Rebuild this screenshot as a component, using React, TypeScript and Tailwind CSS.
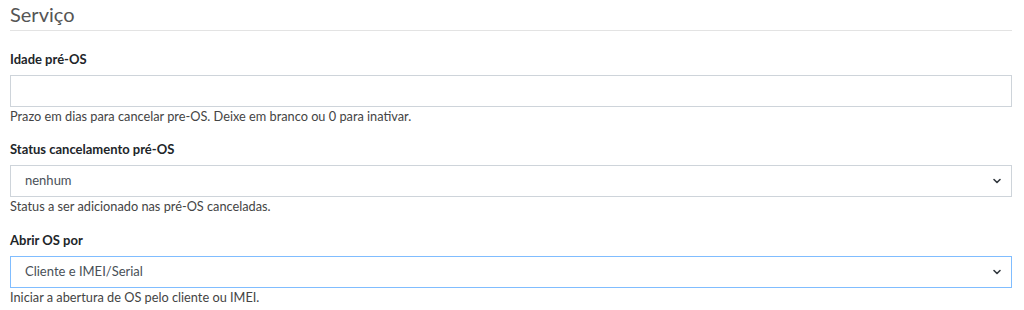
import { ChevronDown } from "lucide-react";

/** Bold field label above a control. */
function FieldLabel({ children }: { children: string }) {
  return <label className="block text-[13px] leading-[16px] font-bold text-[#212529] mb-[8px]">{children}</label>;
}

/** Help text below a control. */
function Help({ children }: { children: string }) {
  return <p className="text-[12.75px] leading-[18px] text-[#444]">{children}</p>;
}

/** Fake select box, optionally in focused state. */
function SelectBox({ value, focused }: { value: string; focused?: boolean }) {
  return (
    <div
      className={
        focused
          ? "h-[32px] flex items-center justify-between border border-[#80bdff] bg-white pl-[14px] pr-[8px] text-[13px] text-[#495057]"
          : "h-[32px] flex items-center justify-between border border-[#ced4da] bg-white pl-[14px] pr-[8px] text-[13px] text-[#495057]"
      }
    >
      <span>{value}</span>
      <ChevronDown size={12} strokeWidth={3.25} className="text-[#343a40]" />
    </div>
  );
}

export default function App() {
  return (
    <div className="w-[1024px] h-[310px] bg-white pl-[10px] pr-[12px] pt-[2px] font-['Source_Sans_Pro','Lato',sans-serif] overflow-hidden">
      <h4 className="text-[20px] leading-[24px] text-[#555]">Serviço</h4>
      <hr className="mt-[4px] border-0 h-px bg-[#e3e3e3]" />

      <div className="mt-[20px]">
        <FieldLabel>Idade pré-OS</FieldLabel>
        <div className="h-[32px] border border-[#ced4da] bg-white" />
        <Help>Prazo em dias para cancelar pre-OS. Deixe em branco ou 0 para inativar.</Help>
      </div>

      <div className="mt-[16px]">
        <FieldLabel>Status cancelamento pré-OS</FieldLabel>
        <SelectBox value="nenhum" />
        <Help>Status a ser adicionado nas pré-OS canceladas.</Help>
      </div>

      <div className="mt-[17px]">
        <FieldLabel>Abrir OS por</FieldLabel>
        <SelectBox value="Cliente e IMEI/Serial" focused />
        <Help>Iniciar a abertura de OS pelo cliente ou IMEI.</Help>
      </div>
    </div>
  );
}
